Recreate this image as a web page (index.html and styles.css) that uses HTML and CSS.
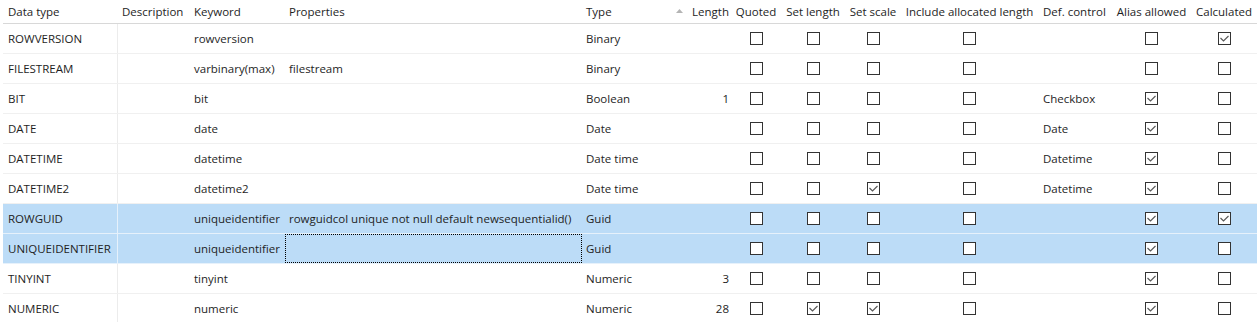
FILE: index.html
```html
<!DOCTYPE html>
<html lang="en">
<head>
  <meta charset="UTF-8" />
  <title>Data types</title>
  <link rel="stylesheet" href="styles.css">
</head>
<body>

<div class="grid" id="grid">
  <div class="row head">
    <div class="cell">Data type</div>
    <div class="cell">Description</div>
    <div class="cell">Keyword</div>
    <div class="cell">Properties</div>
    <div class="cell">Type</div>
    <div class="cell num">
      <svg class="sort" width="7" height="4" viewBox="0 0 7 4"><polygon points="0,4 3.5,0 7,4" fill="#b4b4b4"/></svg>
      <span>Length</span>
    </div>
    <div class="cell mid">Quoted</div>
    <div class="cell mid">Set length</div>
    <div class="cell mid">Set scale</div>
    <div class="cell mid">Include allocated length</div>
    <div class="cell">Def. control</div>
    <div class="cell mid">Alias allowed</div>
    <div class="cell mid">Calculated</div>
  </div>
</div>

<script>
  // name, keyword, properties, type, length, quoted, setLength, setScale, inclAlloc, defControl, alias, calc
  const rows = [
    ['ROWVERSION', 'rowversion', '', 'Binary', '', 0, 0, 0, 0, '', 0, 1],
    ['FILESTREAM', 'varbinary(max)', 'filestream', 'Binary', '', 0, 0, 0, 0, '', 0, 0],
    ['BIT', 'bit', '', 'Boolean', '1', 0, 0, 0, 0, 'Checkbox', 1, 0],
    ['DATE', 'date', '', 'Date', '', 0, 0, 0, 0, 'Date', 1, 0],
    ['DATETIME', 'datetime', '', 'Date time', '', 0, 0, 0, 0, 'Datetime', 1, 0],
    ['DATETIME2', 'datetime2', '', 'Date time', '', 0, 0, 1, 0, 'Datetime', 1, 0],
    ['ROWGUID', 'uniqueidentifier', 'rowguidcol unique not null default newsequentialid()', 'Guid', '', 0, 0, 0, 0, '', 1, 1],
    ['UNIQUEIDENTIFIER', 'uniqueidentifier', '', 'Guid', '', 0, 0, 0, 0, '', 1, 0],
    ['TINYINT', 'tinyint', '', 'Numeric', '3', 0, 0, 0, 0, '', 1, 0],
    ['NUMERIC', 'numeric', '', 'Numeric', '28', 0, 1, 1, 0, '', 1, 0]
  ];

  const check = '<svg width="9" height="7" viewBox="0 0 9 7"><polyline points="0.5,3 3.5,6 8.5,1" fill="none" stroke="#5a5a5a" stroke-width="1.2"/></svg>';
  const box = v => `<div class="cell mid"><span class="box">${v ? check : ''}</span></div>`;

  const grid = document.getElementById('grid');
  rows.forEach((r, i) => {
    const row = document.createElement('div');
    row.className = 'row' + (i === 6 || i === 7 ? ' selected' : '');
    row.innerHTML =
      `<div class="cell first">${r[0]}</div>` +
      `<div class="cell"></div>` +
      `<div class="cell">${r[1]}</div>` +
      `<div class="cell${i === 7 ? ' focus' : ''}">${r[2]}</div>` +
      `<div class="cell">${r[3]}</div>` +
      `<div class="cell num">${r[4]}</div>` +
      box(r[5]) + box(r[6]) + box(r[7]) + box(r[8]) +
      `<div class="cell">${r[9]}</div>` +
      box(r[10]) + box(r[11]);
    grid.appendChild(row);
  });
</script>

</body>
</html>
```

FILE: styles.css
```css
html, body {
  margin: 0;
  padding: 0;
  background: #fff;
  font-family: 'Open Sans', 'Noto Sans', sans-serif;
  font-size: 11.5px;
  color: #1e1e1e;
  overflow: hidden;
}

.grid {
  margin-left: 3px;
}

.row {
  display: grid;
  grid-template-columns: 115px 72px 95px 297px 83px 67px 48px 66px 54px 139px 73px 79px 66px;
  height: 29px;
  border-bottom: 1px solid #f0f0f0;
}

.row.head {
  height: 23px;
  border-bottom: 1px solid #d8d8d8;
}

.row.selected {
  background: #bcdcf7;
  border-bottom-color: #e6f1fb;
}

.cell {
  display: flex;
  align-items: center;
  padding: 0 4px;
  white-space: nowrap;
  overflow: hidden;
  box-sizing: border-box;
}

.cell.first {
  padding-left: 5px;
  border-right: 1px solid #ececec;
}

.row.selected .cell.first {
  border-right-color: #e6f1fb;
}

.head .cell:first-child {
  padding-left: 5px;
}

.cell.num {
  justify-content: flex-end;
  padding-right: 3px;
}

.cell.mid {
  justify-content: center;
  padding: 0;
}

.sort {
  margin-right: 9px;
  margin-bottom: 2px;
}

.cell.focus {
  border: 1px dotted #000;
}

.box {
  width: 13px;
  height: 13px;
  box-sizing: border-box;
  border: 1px solid #333;
  background: #fff;
  display: flex;
  align-items: center;
  justify-content: center;
}
```
